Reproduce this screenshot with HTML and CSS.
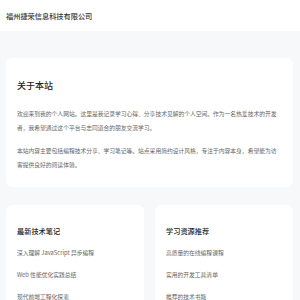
FILE: index.html
```html
<!DOCTYPE html>
<html lang="zh-CN">

<head>
    <meta charset="UTF-8">
    <meta name="viewport" content="width=device-width, initial-scale=1.0">
    <title>福州捷荣信息科技有限公司</title>
    <link rel="stylesheet" href="styles.css">
</head>

<body>
    <!-- Top bar -->
    <div class="header">
        <span class="brand">福州捷荣信息科技有限公司</span>
    </div>

    <div class="main">
        <div class="card about">
            <h2>关于本站</h2>
            <p>欢迎来到我的个人网站。这里是我记录学习心得、分享技术见解的个人空间。作为一名热爱技术的开发者，我希望通过这个平台与志同道合的朋友交流学习。</p>
            <p>本站内容主要包括编程技术分享、学习笔记等。站点采用简约设计风格，专注于内容本身，希望能为访客提供良好的阅读体验。</p>
        </div>

        <div class="columns">
            <div class="card">
                <h3>最新技术笔记</h3>
                <ul>
                    <li>深入理解 JavaScript 异步编程</li>
                    <li>Web 性能优化实践总结</li>
                    <li>现代前端工程化探索</li>
                </ul>
            </div>
            <div class="card">
                <h3>学习资源推荐</h3>
                <ul>
                    <li>高质量的在线编程课程</li>
                    <li>实用的开发工具清单</li>
                    <li>推荐的技术书籍</li>
                </ul>
            </div>
        </div>
    </div>
</body>

</html>
```

FILE: styles.css
```css
body {
    margin: 0;
    font-family: "Noto Sans CJK SC", "Noto Sans", sans-serif;
    background-color: #f7f8fa;
    color: #333;
}

.header {
    height: 31px;
    background-color: #fff;
    display: flex;
    align-items: center;
    padding-left: 6px;
}

.brand {
    font-size: 7.2px;
    font-weight: 500;
    color: #333;
}

.main {
    padding: 27px 7px 0 6px;
}

.card {
    background-color: #fff;
    border-radius: 6px;
    padding: 22px 14px 16px 11px;
}

.about {
    height: 129px;
    box-sizing: border-box;
}

.card h2 {
    margin: 0;
    font-size: 9px;
    line-height: 11px;
    font-weight: 500;
    color: #222;
}

.card p {
    margin: 16px 0 0;
    font-size: 5.78px;
    line-height: 14px;
    color: #666;
}

.card p + p {
    margin-top: 9px;
}

.columns {
    display: grid;
    grid-template-columns: 1fr 1fr;
    gap: 11px;
    margin-top: 18px;
}

.card h3 {
    margin: 0;
    font-size: 7.2px;
    line-height: 9px;
    font-weight: 500;
    color: #222;
}

.card ul {
    list-style: none;
    margin: 11px 0 0;
    padding: 0;
}

.card li {
    font-size: 5.78px;
    line-height: 12px;
    margin-bottom: 10px;
    color: #666;
}
```
